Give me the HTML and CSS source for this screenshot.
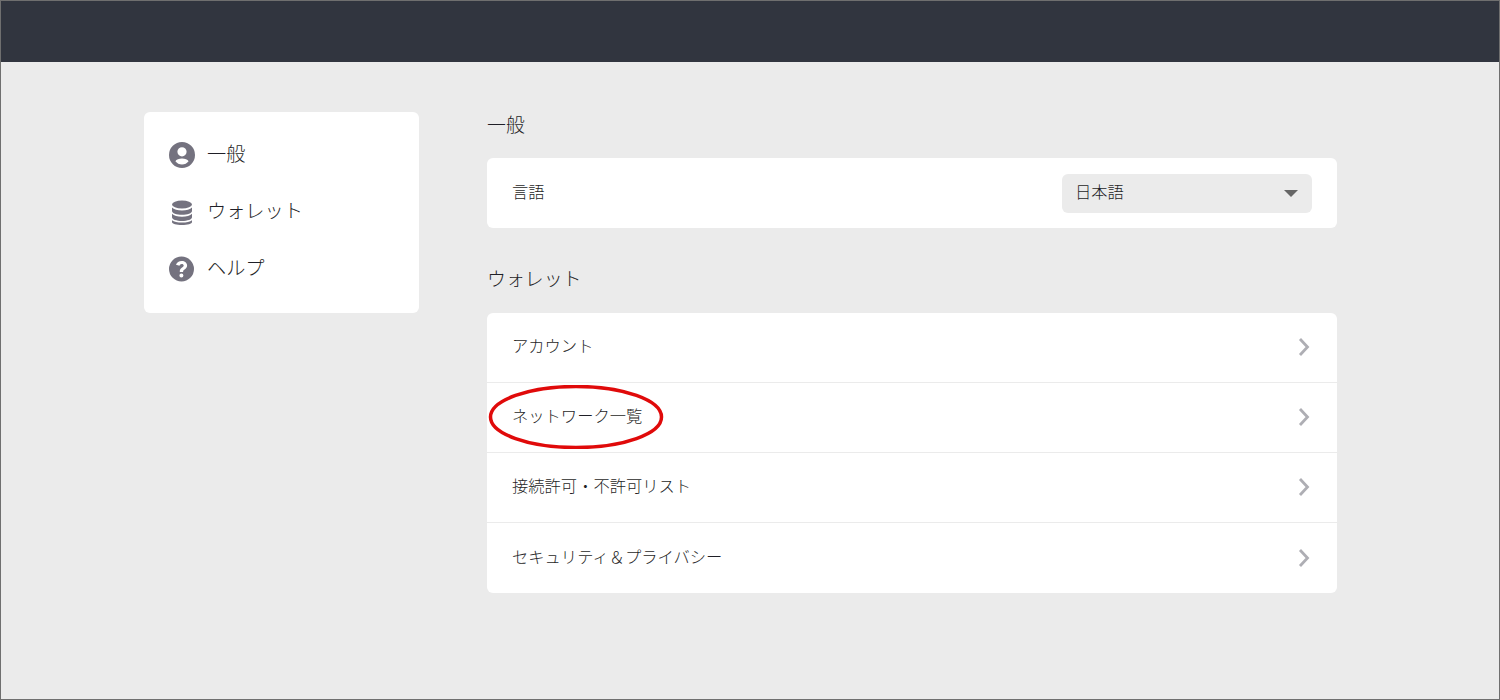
FILE: index.html
```html
<!DOCTYPE html>
<html lang="ja">

<head>
  <meta charset="UTF-8" />
  <title>設定</title>
  <link rel="stylesheet" href="styles.css">
</head>

<body>
  <div class="frame">
    <header class="topbar"></header>

    <div class="contenido">
      <nav class="menu">
        <a class="menu-item">
          <svg class="menu-icono" viewBox="0 0 26 26" width="26" height="26">
            <path fill-rule="evenodd" d="M13 0a13 13 0 1 0 0 26a13 13 0 0 0 0-26zM13 5.200a4.600 4.600 0 1 1 0 9.200a4.600 4.600 0 0 1 0-9.200zM13 16.600c3 0 5.600.9 6.600 2.600c-1.500 2-3.900 3.300-6.600 3.300s-5.100-1.300-6.600-3.300c1-1.700 3.600-2.600 6.600-2.600z" />
          </svg>
          <span class="menu-texto">一般</span>
        </a>
        <a class="menu-item">
          <svg class="menu-icono" viewBox="0 0 26 26" width="26" height="26">
            <g transform="translate(0 1)">
              <ellipse cx="13" cy="4.500" rx="10" ry="4" />
              <path d="M3 7.500v3.500c0 2.200 4.500 3.800 10 3.800s10-1.600 10-3.800V7.500c-1.700 2-5.700 3-10 3s-8.300-1-10-3z" />
              <path d="M3 13.800v3.500c0 2.200 4.500 3.700 10 3.700s10-1.500 10-3.700v-3.500c-1.700 2-5.700 2.900-10 2.900s-8.300-.9-10-2.900z" />
              <path d="M3 20.200v1.800c0 1.900 4.500 3 10 3s10-1.100 10-3v-1.800c-1.700 1.700-5.700 2.400-10 2.400s-8.300-.7-10-2.400z" />
            </g>
          </svg>
          <span class="menu-texto">ウォレット</span>
        </a>
        <a class="menu-item">
          <svg class="menu-icono" viewBox="0 0 26 26" width="26" height="26">
            <path fill-rule="evenodd" d="M12.500 .5a12.500 12.500 0 1 0 0 25a12.500 12.500 0 0 0 0-25zM12.800 5c3 0 5.300 1.900 5.300 4.500c0 2-1.100 3-2.500 3.900c-1.100.7-1.500 1.100-1.500 2v.6h-3.300v-.9c0-1.900 1-2.900 2.300-3.700c1.100-.7 1.600-1.100 1.600-1.900c0-.9-.8-1.500-1.900-1.500c-1.200 0-2 .7-2.300 1.800L7 8.700C7.700 6.400 9.900 5 12.800 5zM12.400 17.600a2 2 0 1 1 0 4a2 2 0 0 1 0-4z" />
          </svg>
          <span class="menu-texto">ヘルプ</span>
        </a>
      </nav>

      <main class="principal">
        <h2 class="titulo">一般</h2>
        <section class="tarjeta">
          <div class="fila fila-idioma">
            <span class="fila-texto">言語</span>
            <div class="selector">
              <span class="fila-texto">日本語</span>
              <i class="flecha"></i>
            </div>
          </div>
        </section>

        <h2 class="titulo titulo-wallet">ウォレット</h2>
        <section class="tarjeta">
          <div class="fila">
            <span class="fila-texto">アカウント</span>
            <svg class="chevron" viewBox="0 0 12 18" width="12" height="18"><path d="M2 1l7.500 8l-7.500 8" /></svg>
          </div>
          <div class="fila">
            <span class="fila-texto">ネットワーク一覧</span>
            <svg class="chevron" viewBox="0 0 12 18" width="12" height="18"><path d="M2 1l7.500 8l-7.500 8" /></svg>
            <svg class="ovalo" viewBox="0 0 176 64" width="176" height="64"><ellipse cx="88" cy="32" rx="85.500" ry="30.500" /></svg>
          </div>
          <div class="fila">
            <span class="fila-texto">接続許可・不許可リスト</span>
            <svg class="chevron" viewBox="0 0 12 18" width="12" height="18"><path d="M2 1l7.500 8l-7.500 8" /></svg>
          </div>
          <div class="fila">
            <span class="fila-texto">セキュリティ＆プライバシー</span>
            <svg class="chevron" viewBox="0 0 12 18" width="12" height="18"><path d="M2 1l7.500 8l-7.500 8" /></svg>
          </div>
        </section>
      </main>
    </div>
  </div>
</body>

</html>
```

FILE: styles.css
```css
:root {
  --color-fondo: #ebebeb;
  --color-barra: #31353f;
  --color-texto: #1f1f27;
  --color-icono: #74727f;
  --borde-radius: 6px;
}

* {
  box-sizing: border-box;
}

body {
  margin: 0;
  font-family: "Noto Sans CJK JP", "Noto Sans", sans-serif;
  font-weight: 300;
  font-size: 16.3px;
  color: var(--color-texto);
}

.frame {
  height: 700px;
  border: 1px solid #6f6f6f;
  background-color: var(--color-fondo);
  overflow: hidden;
}

.topbar {
  height: 61px;
  background-color: var(--color-barra);
}

.contenido {
  display: flex;
  align-items: flex-start;
  gap: 68px;
  padding: 50px 0 0 143px;
}

.menu {
  width: 275px;
  height: 201px;
  padding: 14px 0 0 25px;
  background: white;
  border-radius: var(--borde-radius);
}

.menu-item {
  display: flex;
  align-items: center;
  gap: 12px;
  height: 57px;
  font-size: 19.2px;
}

.menu-icono {
  flex: none;
  fill: var(--color-icono);
}

.menu-texto {
  margin-bottom: 4px;
}

.principal {
  width: 850px;
}

.titulo {
  margin: 0;
  height: 46px;
  font-size: 18.9px;
  font-weight: 300;
  line-height: 24px;
}

.titulo-wallet {
  margin-top: 38px;
  height: 47px;
}

.tarjeta {
  background: white;
  border-radius: var(--borde-radius);
}

.fila {
  position: relative;
  display: flex;
  align-items: center;
  justify-content: space-between;
  height: 70px;
  padding: 0 27px 0 25px;
  border-bottom: 1px solid #ebebeb;
}

.fila:last-child {
  border-bottom: none;
}

.fila-idioma {
  padding-right: 25px;
}

.fila-texto {
  margin-bottom: 5px;
}

.selector {
  display: flex;
  align-items: center;
  justify-content: space-between;
  width: 250px;
  height: 39px;
  padding: 0 14px 0 13px;
  background-color: var(--color-fondo);
  border-radius: var(--borde-radius);
}

.flecha {
  width: 0;
  height: 0;
  border-left: 7px solid transparent;
  border-right: 7px solid transparent;
  border-top: 7px solid #666;
}

.chevron {
  margin-bottom: 1px;
  fill: none;
  stroke: #aeaeb4;
  stroke-width: 2.800;
}

/* el ovalo rojo va encima de la fila */
.ovalo {
  position: absolute;
  left: 1px;
  top: 2px;
  fill: none;
  stroke: #e00a0a;
  stroke-width: 3.500;
}
```
